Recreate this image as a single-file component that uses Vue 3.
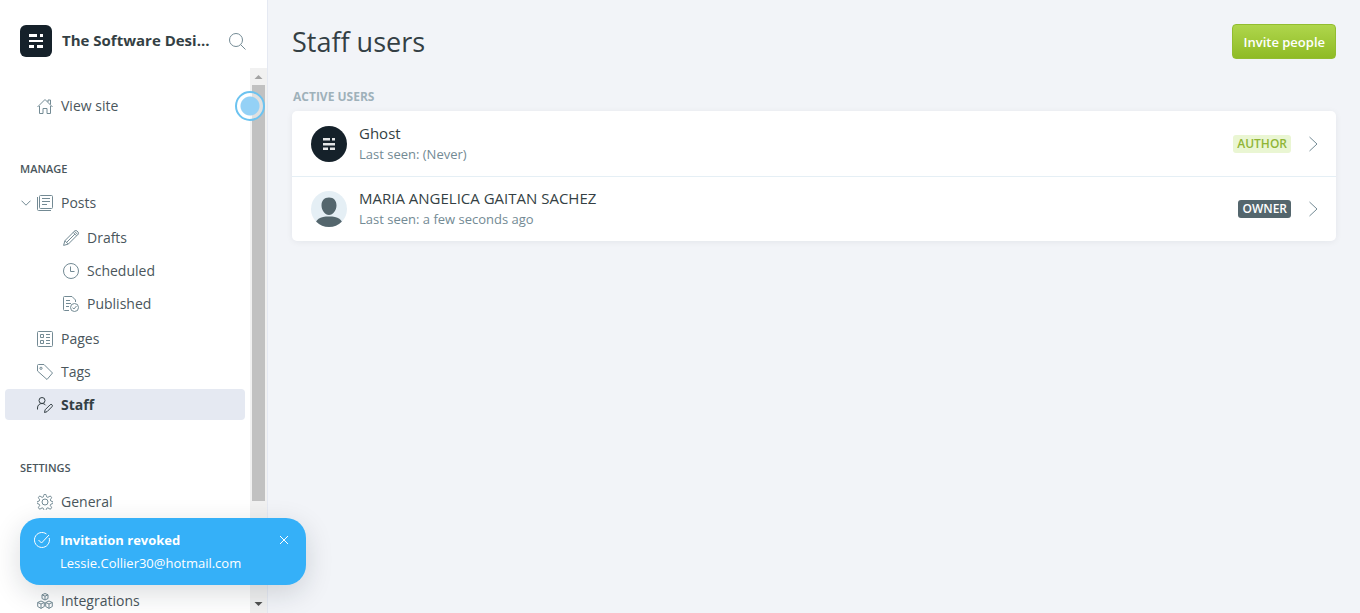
<script setup>
const manage = [
  { label: 'Posts', icon: 'posts', expand: true },
  { label: 'Drafts', icon: 'pen', sub: true },
  { label: 'Scheduled', icon: 'clock', sub: true },
  { label: 'Published', icon: 'published', sub: true, last: true },
  { label: 'Pages', icon: 'pages' },
  { label: 'Tags', icon: 'tag' },
  { label: 'Staff', icon: 'staff', active: true },
]
const settings = [
  { label: 'General', icon: 'gear' },
  { label: 'Integrations', icon: 'modules', apart: true },
]
const icons = {
  home: '<path d="M.5 9 8 1.500l7.500 7.500M2.500 8v7.500h3.500v-5h4v5h3.500V8M11 4V2h2.500v4.500"/>',
  posts: '<rect x="2.500" y=".5" width="13" height="13" rx="1"/><path d="M.5 2v12.500a1 1 0 0 0 1 1H14M5 3.500h8M5 6.500h8M5 9.500h5"/>',
  pen: '<path d="m.6 15.400 1.300-4.700L11.600 1a1.700 1.700 0 0 1 2.400 0l1 1a1.700 1.700 0 0 1 0 2.400L5.300 14.100zM1.900 10.700l3.400 3.400M10.200 2.400l3.400 3.400M11.400 1.200l3.400 3.400M3.700 12.300l8.200-8.200"/>',
  clock: '<circle cx="8" cy="8" r="7.500"/><path d="M7.500 3.500V8.500h4"/>',
  published: '<path d="M6 14.500H1.500a1 1 0 0 1-1-1V1.500a1 1 0 0 1 1-1H9l3.500 3.500V6M3 4.500h4M3 7.500h5M3 10.500h3"/><circle cx="11.500" cy="11.500" r="4"/><path d="m9.500 11.600 1.400 1.400 2.600-3"/>',
  pages: '<rect x=".5" y=".5" width="15" height="15" rx="1"/><path d="M3.500 3.500h3v3h-3zM3.500 9.500h3v3h-3zM9 3.500h4M9 6.500h4M9 9.500h4M9 12.500h4"/>',
  tag: '<path d="M.5 1.500a1 1 0 0 1 1-1H7l8.500 8.500L10 15.500.5 7z"/><circle cx="4" cy="4.300" r="1.100"/>',
  staff: '<circle cx="5" cy="3.500" r="3"/><path d="M.5 12.500V11c0-2.800 2-4.500 4.500-4.500 1.600 0 2.900.7 3.700 1.800M7.500 15.500l.6-2.700 5-5a1.300 1.300 0 0 1 1.900 0 1.300 1.300 0 0 1 0 1.900l-5 5z"/>',
  gear: '<circle cx="8" cy="8" r="3"/><path d="M6.700 1.500a1.300 1.300 0 0 1 2.600 0l.3 1.300 1.300.6 1.200-.8a1.400 1.400 0 0 1 2 2l-.8 1.200.6 1.300 1 .3a1.200 1.200 0 0 1 0 2.400l-1 .3-.6 1.300.8 1.200a1.400 1.400 0 0 1-2 2l-1.200-.8-1.300.6-.3 1a1.300 1.300 0 0 1-2.600 0l-.3-1-1.300-.6-1.200.8a1.400 1.400 0 0 1-2-2l.8-1.200-.6-1.300-1-.3a1.200 1.200 0 0 1 0-2.400l1-.3.6-1.300-.8-1.200a1.400 1.400 0 0 1 2-2l1.200.8 1.300-.6z"/>',
  modules: '<path d="m8 .5 3 1.300v3.700L8 7 5 5.500V1.800zM5 1.800l3 1.400 3-1.400M8 3.200V7M4 8l3.300 1.500v4L4 15.400.7 13.500v-4zM.7 9.500 4 11l3.300-1.500M4 11v4.400M12 8l3.300 1.500v4L12 15.400l-3.300-1.900v-4zM8.700 9.500 12 11l3.300-1.500M12 11v4.400"/>',
}
const groups = [
  { title: 'Manage', items: manage },
  { title: 'Settings', items: settings },
]
const users = [
  { name: 'Ghost', seen: '(Never)', role: 'Author', logo: true },
  { name: 'MARIA ANGELICA GAITAN SACHEZ', seen: 'a few seconds ago', role: 'Owner', logo: false },
]
</script>

<template>
  <div class="app">
    <aside class="sidebar">
      <header class="brand">
        <svg class="logo" viewBox="0 0 32 32" aria-hidden="true">
          <rect width="32" height="32" rx="6" fill="#15212a" />
          <path d="M9 9h8v3H9zM20 9h3v3h-3zM9 15h14v2H9zM9 20h5v3H9zM17 20h6v3h-6z" fill="#fff" />
        </svg>
        <span class="site">The Software Desi...</span>
        <button class="search" aria-label="Search">
          <svg viewBox="0 0 17 17"><circle cx="7" cy="7" r="6.500" /><path d="m11.700 11.700 4.800 4.800" /></svg>
        </button>
      </header>
      <div class="scroller">
        <nav class="nav">
          <a class="item" href="#"><svg class="icon" viewBox="0 0 16 16" v-html="icons.home" />View site</a>
          <section v-for="g in groups" :key="g.title" class="group">
            <h2>{{ g.title }}</h2>
            <a
              v-for="i in g.items"
              :key="i.label"
              href="#"
              class="item"
              :class="{ sub: i.sub, last: i.last, active: i.active, apart: i.apart, expand: i.expand }"
            >
              <svg v-if="i.expand" class="caret" viewBox="0 0 10 6"><path d="m.5.7 4.500 4.500L9.500.7" /></svg>
              <svg class="icon" viewBox="0 0 16 16" v-html="icons[i.icon]" />{{ i.label }}
            </a>
          </section>
        </nav>
        <div class="track" aria-hidden="true">
          <svg viewBox="0 0 17 17"><path d="m4.500 11 4-4 4 4z" fill="#a3a3a3" /></svg>
          <div class="thumb"></div>
          <div class="rest"></div>
          <svg viewBox="0 0 17 17"><path d="m4.500 6 4 4 4-4z" fill="#505050" /></svg>
        </div>
        <div class="beacon"></div>
      </div>
    </aside>

    <main class="main">
      <header class="top">
        <h1>Staff users</h1>
        <button class="invite">Invite people</button>
      </header>
      <h3>Active users</h3>
      <div class="list">
        <a v-for="u in users" :key="u.name" class="user" href="#">
          <svg v-if="u.logo" class="avatar" viewBox="0 0 36 36">
            <circle cx="18" cy="18" r="18" fill="#15212a" />
            <path d="M12 12h7v2.500h-7zM21 12h3v2.500h-3zM12 17h12v2.500H12zM12 21.500h5V24h-5zM19 21.500h5V24h-5z" fill="#e4e6e7" />
          </svg>
          <svg v-else class="avatar" viewBox="0 0 36 36">
            <clipPath id="round"><circle cx="18" cy="18" r="18" /></clipPath>
            <g clip-path="url(#round)">
              <rect width="36" height="36" fill="#e5eff5" />
              <path d="M18 6.500c5 0 7.500 3.500 7.500 8S22 24 18 24s-7.500-5-7.500-9.500 2.500-8 7.500-8zM4 36c0-8 5-10.500 14-10.500s14 2.500 14 10.500z" fill="#54666d" />
            </g>
          </svg>
          <span class="who">
            <span class="name">{{ u.name }}</span>
            <span class="seen">Last seen: {{ u.seen }}</span>
          </span>
          <span class="badge" :class="u.role.toLowerCase()">{{ u.role }}</span>
          <svg class="chevron" viewBox="0 0 9 16"><path d="m.5 1 7.500 7-7.500 7" /></svg>
        </a>
      </div>
    </main>

    <div class="toast" role="status">
      <svg class="check" viewBox="0 0 16 16"><path d="M15.200 6A7.500 7.500 0 1 1 12.500 2M4.500 8l3 3 7.500-8" /></svg>
      <div class="message">
        <strong>Invitation revoked</strong>
        <span>Lessie.Collier30@hotmail.com</span>
      </div>
      <button class="close" aria-label="Close"><svg viewBox="0 0 10 10"><path d="m1 1 8 8M9 1 1 9" /></svg></button>
    </div>
  </div>
</template>

<style>
body {
  background: #f2f4f8;
}
</style>

<style scoped>
.app {
  display: flex;
  height: 100vh;
  overflow: hidden;
  font-family: "Open Sans", "Noto Sans", sans-serif;
  font-size: 14px;
  color: #343f44;
}
* {
  box-sizing: border-box;
}
a {
  color: inherit;
  text-decoration: none;
}
button {
  font: inherit;
  border: 0;
  background: none;
  padding: 0;
}
svg {
  display: block;
  flex: none;
}
.sidebar {
  display: flex;
  flex-direction: column;
  flex: none;
  width: 268px;
  background: #fff;
  border-right: 1px solid #e5e9f2;
}
.brand {
  display: flex;
  align-items: center;
  flex: none;
  height: 68px;
  padding: 14px 21px 0 20px;
}
.logo {
  width: 32px;
  height: 32px;
}
.site {
  flex: 1;
  margin-left: 10px;
  white-space: nowrap;
  font-size: 15px;
  line-height: 20px;
  padding-bottom: 2px;
  font-weight: 700;
}
.search svg {
  width: 17px;
  height: 17px;
}
.search svg,
.icon,
.caret,
.chevron {
  fill: none;
  stroke: #738a94;
  stroke-width: 1;
}
.scroller {
  position: relative;
  display: flex;
  flex: 1;
  min-height: 0;
}
.nav {
  flex: 1;
  min-width: 0;
  padding: 22px 5px 0;
  overflow: hidden;
}
.item {
  display: flex;
  align-items: center;
  height: 31px;
  margin-bottom: 2px;
  padding-left: 32px;
  border-radius: 4px;
  color: #4a565c;
}
.icon {
  width: 16px;
  height: 16px;
  margin-right: 8px;
}
.item.expand {
  padding-left: 16px;
  margin-bottom: 4px;
}
.caret {
  width: 10px;
  height: 6px;
  margin-right: 6px;
}
.item.sub {
  padding-left: 58px;
}
.item.last {
  margin-bottom: 4px;
}
.item.active {
  background: #e5e9f2;
  font-weight: 700;
  color: #343f44;
}
.active .icon {
  stroke: #343f44;
}
.item.apart {
  margin-top: 68px;
}
.group {
  padding-top: 36px;
}
h2 {
  margin: 0;
  padding-left: 15px;
  height: 28px;
  line-height: 20px;
  font-size: 11px;
  font-weight: 600;
  color: #4a565c;
  text-transform: uppercase;
}
.track {
  display: flex;
  flex-direction: column;
  width: 17px;
  background: #f1f1f1;
}
.track svg {
  width: 17px;
  height: 17px;
}
.thumb {
  flex: 416;
  margin: 0 2px;
  background: #c1c1c1;
}
.rest {
  flex: 95;
}
.beacon {
  position: absolute;
  right: 2px;
  top: 23px;
  width: 30px;
  height: 30px;
  border: 2px solid #6cc3f0;
  border-radius: 50%;
  background: radial-gradient(circle, #94d1f6 9px, #ffffff80 10px);
}
.main {
  flex: 1;
  min-width: 0;
  padding: 24px;
}
.top {
  display: flex;
  justify-content: space-between;
  align-items: center;
}
h1 {
  margin: 0;
  line-height: 35px;
  font-size: 27px;
  font-weight: 500;
}
.invite {
  height: 35px;
  padding: 0 10px;
  border-radius: 4px;
  border: 1px solid #92bd30;
  background: linear-gradient(#afd64c, #8fbb25);
  color: #fff;
  font-size: 13px;
  font-weight: 600;
}
h3 {
  margin: 28px 0 4px 1px;
  line-height: 20px;
  font-size: 12px;
  font-weight: 700;
  color: #9fb1ba;
  text-transform: uppercase;
}
.list {
  background: #fff;
  border-radius: 5px;
  box-shadow: 0 1px 6px #15212a10;
}
.user {
  display: flex;
  align-items: center;
  height: 65px;
  padding: 0 18px 0 19px;
}
.user + .user {
  border-top: 1px solid #e5eff5;
}
.avatar {
  width: 36px;
  height: 36px;
}
.who {
  flex: 1;
  display: grid;
  margin-left: 12px;
}
.name {
  font-size: 15px;
  line-height: 21px;
  font-weight: 500;
}
.seen {
  font-size: 13px;
  line-height: 21px;
  color: #738a94;
}
.badge {
  padding: 0 4px;
  border-radius: 3px;
  font-size: 12px;
  line-height: 18px;
  font-weight: 600;
  text-transform: uppercase;
}
.author {
  background: #eaf6d3;
  color: #8fb536;
}
.owner {
  background: #54666d;
  color: #fff;
}
.chevron {
  width: 9px;
  height: 16px;
  margin-left: 18px;
}
.toast {
  position: absolute;
  left: 20px;
  bottom: 28px;
  display: flex;
  align-items: flex-start;
  width: 286px;
  padding: 11px 17px 10px 14px;
  border-radius: 20px;
  background: #35b0f8;
  color: #fff;
  box-shadow: 0 8px 28px #15212a28;
}
.toast svg {
  fill: none;
  stroke: #fff;
}
.check {
  width: 16px;
  height: 16px;
  margin: 3px 10px 0 0;
}
.message {
  flex: 1;
  display: grid;
  line-height: 23px;
  font-size: 13px;
}
.close svg {
  width: 10px;
  height: 10px;
  margin-top: 6px;
}
</style>
